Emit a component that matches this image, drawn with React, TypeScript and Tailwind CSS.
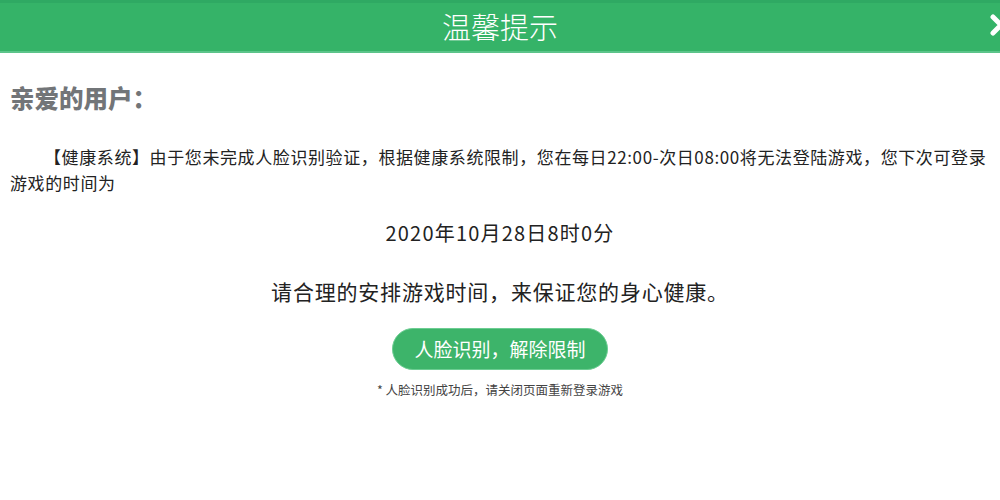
import React from "react";

const font = { fontFamily: '"Noto Sans CJK SC", "Noto Sans", sans-serif' };

export default function App() {
  return (
    <div className="w-[1000px] h-[500px] bg-white overflow-hidden relative" style={font}>
      <div className="h-[53px] bg-[#35b368] border-t-[3px] border-t-[#2fa963] border-b-[2px] border-b-[#5cc48a] flex items-center justify-center relative">
        <span className="text-white text-[29px] font-light leading-none tracking-[0px] -mt-[2px]">温馨提示</span>
        <svg className="absolute left-[990px] top-[11px]" width="22" height="22" viewBox="0 0 22 22">
          <path d="M3 3 L19 19 M19 3 L3 19" stroke="white" strokeWidth="5" strokeLinecap="round" />
        </svg>
      </div>
      <div className="px-[10px]">
        <div className="mt-[33px] text-[24.5px] font-black text-[#727578] leading-none">亲爱的用户：</div>
        <p className="mt-[33px] text-[17px] leading-[26px] text-[#222] indent-[2em] tracking-[0.6px]">
          【健康系统】由于您未完成人脸识别验证，根据健康系统限制，您在每日22:00-次日08:00将无法登陆游戏，您下次可登录游戏的时间为
        </p>
        <div className="mt-[27px] text-center text-[20px] leading-none text-[#222] tracking-[1.2px]">2020年10月28日8时0分</div>
        <div className="mt-[38px] text-center text-[21px] leading-none text-[#222] tracking-[0.8px]">请合理的安排游戏时间，来保证您的身心健康。</div>
        <div className="mt-[26px] flex justify-center">
          <div className="w-[216px] h-[42px] rounded-full bg-[#3db46a] border border-[#6ccd92] flex items-center justify-center text-white text-[19px] leading-none">
            人脸识别，解除限制
          </div>
        </div>
        <div className="mt-[14px] text-center text-[12.5px] leading-none text-[#444]">* 人脸识别成功后，请关闭页面重新登录游戏</div>
      </div>
    </div>
  );
}
